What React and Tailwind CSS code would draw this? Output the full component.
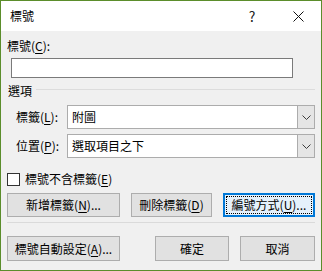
import React from "react";

const font = { fontFamily: '"Noto Sans CJK TC", "Noto Sans", sans-serif' };

function U({ children }) {
  return <span className="underline underline-offset-[2px]">{children}</span>;
}

function Btn({ w, h = "h-[24px]", children, focused }) {
  if (focused) {
    return (
      <div className={`${w} ${h} border-2 border-[#0078d7] bg-[#e5f1fb] flex p-px`}>
        <div className="flex-1 flex items-center justify-center border border-dotted border-black text-[12px] leading-none text-black">
          {children}
        </div>
      </div>
    );
  }
  return (
    <div className={`${w} ${h} border border-[#adadad] bg-[#e1e1e1] flex items-center justify-center text-[12px] leading-none text-black`}>
      {children}
    </div>
  );
}

function Chevron() {
  return (
    <svg width="9" height="5" viewBox="0 0 9 5" className="block">
      <path d="M0.5 0.5 L4.5 4.5 L8.5 0.5" fill="none" stroke="#3c3c3c" strokeWidth="1" />
    </svg>
  );
}

function Combo({ label, value }) {
  return (
    <div className="flex h-[24px] items-center">
      <div className="w-[60px] pl-[9px] text-[12px] leading-none text-black">{label}</div>
      <div className="flex-1 h-full flex border border-[#acacac] bg-white">
        <div className="flex-1 flex items-center pl-[4px] text-[12px] leading-none text-black">{value}</div>
        <div className="w-[17px] h-full bg-[#e5e5e5] border-l border-[#acacac] flex items-center justify-center">
          <Chevron />
        </div>
      </div>
    </div>
  );
}

export default function App() {
  return (
    <div style={font} className="w-[322px] h-[271px] border border-[#5b8d2b] bg-[#f0f0f0] flex flex-col text-black">
      {/* title bar */}
      <div className="h-[30px] bg-white flex items-center">
        <div className="pl-[9px] text-[12px] leading-none flex-1">標號</div>
        <div className="w-[46px] text-center text-[14px] leading-none text-[#222]">?</div>
        <div className="w-[46px] flex items-center justify-center">
          <svg width="11" height="11" viewBox="0 0 11 11">
            <path d="M0.5 0.5 L10.5 10.5 M10.5 0.5 L0.5 10.5" stroke="#111" strokeWidth="1" fill="none" />
          </svg>
        </div>
      </div>

      {/* body */}
      <div className="flex flex-col px-[6px]">
        <div className="mt-[7px] h-[16px] leading-[16px] text-[12px]">
          標號(<U>C</U>):
        </div>
        <div className="mt-[4px] ml-[4px] w-[282px] h-[20px] border border-[#7a7a7a] bg-white"></div>

        <div className="mt-[5px] h-[16px] flex items-start">
          <div className="w-[29px] text-[12px] leading-[16px] pl-px">選項</div>
          <div className="flex-1 mt-[6px] h-px bg-[#dcdcdc]"></div>
        </div>

        <div className="mt-[6px]">
          <Combo label={<>標籤(<U>L</U>):</>} value="附圖" />
        </div>
        <div className="mt-[5px]">
          <Combo label={<>位置(<U>P</U>):</>} value="選取項目之下" />
        </div>

        <div className="mt-[13px] h-[16px] flex items-center">
          <div className="w-[13px] h-[13px] border border-[#333] bg-white"></div>
          <div className="ml-[5px] text-[12px] leading-none">
            標號不含標籤(<U>E</U>)
          </div>
        </div>

        <div className="mt-[6px] flex gap-[11px]">
          <Btn w="w-[113px]">新增標籤(<U>N</U>)...</Btn>
          <Btn w="w-[81px]">刪除標籤(<U>D</U>)</Btn>
          <Btn w="w-[92px]" focused>編號方式(<U>U</U>)...</Btn>
        </div>

        <div className="mt-[5px] h-px bg-[#dadada]"></div>

        <div className="mt-[13px] flex justify-between">
          <Btn w="w-[113px]" h="h-[25px]">標號自動設定(<U>A</U>)...</Btn>
          <div className="flex gap-[11px]">
            <Btn w="w-[74px]" h="h-[25px]">確定</Btn>
            <Btn w="w-[75px]" h="h-[25px]">取消</Btn>
          </div>
        </div>
      </div>
    </div>
  );
}
